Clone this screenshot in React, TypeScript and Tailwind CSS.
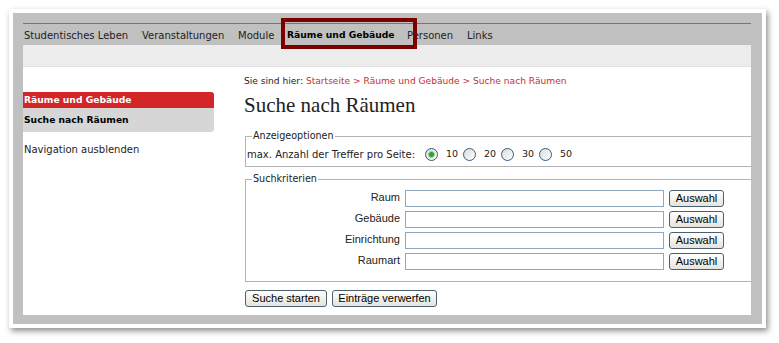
const navItems = [
  { label: "Studentisches Leben", w: "w-[118px]", bold: false },
  { label: "Veranstaltungen", w: "w-[96px]", bold: false },
  { label: "Module", w: "w-[49px]", bold: false },
  { label: "Räume und Gebäude", w: "w-[120px]", bold: true },
  { label: "Personen", w: "w-[60px]", bold: false },
  { label: "Links", w: "w-auto", bold: false },
];

const criteria = ["Raum", "Gebäude", "Einrichtung", "Raumart"];
const perPage = ["10", "20", "30", "50"];

function Radio({ checked }: { checked?: boolean }) {
  return (
    <span className="flex h-[13px] w-[13px] shrink-0 items-center justify-center rounded-full border border-[#2f5a86] bg-gradient-to-br from-[#d8dcdc] to-white">
      {checked ? (
        <span className="h-[7px] w-[7px] rounded-full border border-[#9bd49b] bg-[#25a325]" />
      ) : null}
    </span>
  );
}

function XpButton({ children, className }: { children: string; className: string }) {
  return (
    <button
      className={`${className} block h-[17px] shrink-0 rounded-[3px] border border-[#4f5f72] bg-gradient-to-b from-white to-[#e4e4dc] p-0 font-['Liberation_Sans',Arial,sans-serif] text-[11px] leading-[15px] text-black`}
    >
      {children}
    </button>
  );
}

export default function App() {
  return (
    <div className="relative h-[343px] w-[779px] overflow-hidden bg-white pl-[9px] pt-[9px] font-['DejaVu_Sans',Verdana,sans-serif] text-[#222]">
      <div className="h-[319px] w-[757px] bg-white p-[4px] shadow-[2px_3px_6px_rgba(0,0,0,0.45)]">
        <div className="h-full w-full bg-[#c0c0c0] pb-[9px] pl-[10px] pr-[11px] pt-[10px]">
          <div className="flex h-full w-full flex-col overflow-hidden bg-white">
            <div className="h-[1px] shrink-0 bg-[#e04848]" />
            {/* top navigation */}
            <div className="flex h-[21px] shrink-0 items-center bg-[#c0c0c0] pl-[1px] pt-[1px] text-[10px]">
              {navItems.map((item) => (
                <span
                  key={item.label}
                  className={`${item.w} shrink-0 whitespace-nowrap ${
                    item.bold ? "text-[9.2px] font-bold text-black" : ""
                  }`}
                >
                  {item.label}
                </span>
              ))}
            </div>
            <div className="h-[22px] shrink-0 border-b border-[#e2e2e2] bg-[#ededed]" />

            <div className="flex flex-1">
              {/* sidebar */}
              <div className="w-[191px] shrink-0 pt-[25px]">
                <div className="flex h-[16px] items-center rounded-tr-[3px] bg-[#d42527] pl-[1px] text-[9.2px] font-bold text-white">
                  Räume und Gebäude
                </div>
                <div className="flex h-[24px] items-center rounded-br-[3px] bg-[#d6d6d6] pl-[1px] text-[9.2px] font-bold text-black">
                  Suche nach Räumen
                </div>
                <div className="mt-[12px] pl-[1px] text-[10px] leading-[12px]">
                  Navigation ausblenden
                </div>
              </div>

              {/* main */}
              <div className="ml-[30px] w-[520px] shrink-0 pt-[8px]">
                <div className="whitespace-nowrap text-[9.1px] leading-[12px]">
                  Sie sind hier:{" "}
                  <span className="text-[#c62f2f]">
                    Startseite &gt; Räume und Gebäude &gt; Suche nach Räumen
                  </span>
                </div>
                <h1 className="mt-[6px] font-['Liberation_Serif','Times_New_Roman',serif] text-[21px] leading-[24px] text-[#222]">
                  Suche nach Räumen
                </h1>

                <fieldset className="ml-[1px] mt-[13px] border border-[#b4b4b4] px-[1px] pb-[5px]">
                  <legend className="ml-[5px] px-[1px] text-[9.6px] leading-[12px]">
                    Anzeigeoptionen
                  </legend>
                  <div className="mt-[5px] flex h-[14px] items-center gap-[2px] text-[10px]">
                    <span className="w-[176px] shrink-0 whitespace-nowrap">
                      max. Anzahl der Treffer pro Seite:
                    </span>
                    {perPage.map((n, i) => (
                      <label key={n} className="flex w-[36px] shrink-0 items-center gap-[8px]">
                        <Radio checked={i === 0} />
                        <span className="text-[9.5px]">{n}</span>
                      </label>
                    ))}
                  </div>
                </fieldset>

                <fieldset className="ml-[1px] mt-[6px] border border-[#b4b4b4] px-[1px] pb-[11px]">
                  <legend className="ml-[5px] px-[1px] text-[9.6px] leading-[12px]">
                    Suchkriterien
                  </legend>
                  <div className="mt-[5px] flex flex-col gap-[4px]">
                    {criteria.map((c) => (
                      <div key={c} className="flex h-[17px] items-start">
                        <span className="w-[153px] shrink-0 text-right font-['Liberation_Sans',Arial,sans-serif] text-[11px] leading-[14px]">
                          {c}
                        </span>
                        <input
                          className="ml-[5px] block h-[17px] w-[259px] shrink-0 border border-[#8fa7bf] bg-white"
                          readOnly
                        />
                        <XpButton className="ml-[5px] w-[55px]">Auswahl</XpButton>
                      </div>
                    ))}
                  </div>
                </fieldset>

                <div className="ml-[1px] mt-[8px] flex gap-[5px]">
                  <XpButton className="w-[82px]">Suche starten</XpButton>
                  <XpButton className="w-[105px]">Einträge verwerfen</XpButton>
                </div>
              </div>
            </div>
          </div>
        </div>
      </div>

      {/* annotation box around the active nav item */}
      <div className="absolute left-[281px] top-[18px] h-[31px] w-[136px] border-[4px] border-[#7d0000]" />
    </div>
  );
}
